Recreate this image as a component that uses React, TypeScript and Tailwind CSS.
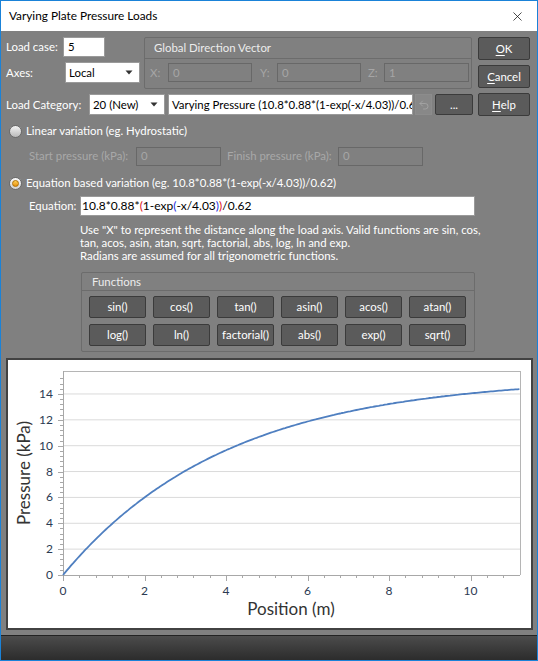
import { X, Undo2 } from 'lucide-react';

// equation used for the preview curve
const pressureAt = (x: number) => (10.8 * 0.88 * (1 - Math.exp(-x / 4.03))) / 0.62;

const PLOT = { left: 55, right: 512, top: 11, bottom: 215 };
const xPx = (v: number) => PLOT.left + v * 40.75;
const yPx = (v: number) => PLOT.bottom - v * 12.93;

function DlgButton({ children, className = '' }: { children: React.ReactNode; className?: string }) {
  return (
    <button
      className={`flex items-center justify-center rounded-[2px] border border-[#3b3b3b] bg-[#5b5b5b] text-white ${className}`}
    >
      {children}
    </button>
  );
}

function Arrow() {
  return (
    <svg width="8" height="5" viewBox="0 0 8 5" className="shrink-0">
      <path d="M0.5 0.5 L7.5 0.5 L4 4.5 Z" fill="#333" />
    </svg>
  );
}

function Dropdown({ value, width }: { value: string; width: string }) {
  return (
    <div className={`flex h-[21px] items-center justify-between border border-[#9a9a9a] bg-white pl-[3px] pr-[6px] text-black ${width}`}>
      <span>{value}</span>
      <Arrow />
    </div>
  );
}

function DisabledInput({ value, width }: { value: string; width: string }) {
  return (
    <div className={`flex h-[19px] items-center border border-[#686868] px-[4px] text-[#a6a6a6] ${width}`}>{value}</div>
  );
}

function Chart() {
  const pts: string[] = [];
  for (let x = 0; x <= 11.22; x += 0.05) {
    pts.push(`${xPx(x).toFixed(1)},${yPx(pressureAt(x)).toFixed(1)}`);
  }
  const majorY = [0, 2, 4, 6, 8, 10, 12, 14];
  const minorY: number[] = [];
  for (let v = 0; v <= 15.6; v += 0.4) minorY.push(v);
  const majorX = [0, 2, 4, 6, 8, 10];
  const minorX: number[] = [];
  for (let v = 0; v <= 11.2; v += 0.4) minorX.push(v);

  return (
    <svg width="523" height="268" className="block font-['Lato',sans-serif]">
      {majorY.slice(1).map((v) => (
        <line key={v} x1={PLOT.left} x2={PLOT.right} y1={yPx(v)} y2={yPx(v)} stroke="#dadada" strokeWidth="1" />
      ))}
      <line x1={PLOT.left} x2={PLOT.right} y1={PLOT.top + 0.5} y2={PLOT.top + 0.5} stroke="#b5b5b5" />
      <line x1={PLOT.right + 0.5} x2={PLOT.right + 0.5} y1={PLOT.top} y2={PLOT.bottom} stroke="#b5b5b5" />
      <line x1={PLOT.left + 0.5} x2={PLOT.left + 0.5} y1={PLOT.top} y2={PLOT.bottom} stroke="#a8a8a8" />
      <line x1={PLOT.left} x2={PLOT.right} y1={PLOT.bottom + 0.5} y2={PLOT.bottom + 0.5} stroke="#a8a8a8" />
      {minorY.map((v) => (
        <line key={v} x1={PLOT.left - 3} x2={PLOT.left} y1={Math.round(yPx(v)) + 0.5} y2={Math.round(yPx(v)) + 0.5} stroke="#a8a8a8" />
      ))}
      {majorY.map((v) => (
        <line key={v} x1={PLOT.left - 5} x2={PLOT.left} y1={Math.round(yPx(v)) + 0.5} y2={Math.round(yPx(v)) + 0.5} stroke="#a8a8a8" />
      ))}
      {minorX.map((v) => (
        <line key={v} x1={Math.round(xPx(v)) + 0.5} x2={Math.round(xPx(v)) + 0.5} y1={PLOT.bottom} y2={PLOT.bottom + 3} stroke="#a8a8a8" />
      ))}
      {majorX.map((v) => (
        <line key={v} x1={Math.round(xPx(v)) + 0.5} x2={Math.round(xPx(v)) + 0.5} y1={PLOT.bottom} y2={PLOT.bottom + 6} stroke="#a8a8a8" />
      ))}
      {majorY.map((v) => (
        <text key={v} x={45} y={yPx(v) + 4} textAnchor="end" fontSize="12" fill="#2b3a52">
          {v}
        </text>
      ))}
      {majorX.map((v) => (
        <text key={v} x={xPx(v)} y={235} textAnchor="middle" fontSize="12" fill="#2b3a52">
          {v}
        </text>
      ))}
      <polyline points={pts.join(' ')} fill="none" stroke="#4f7fc0" strokeWidth="1.8" />
      <text x={283} y={255} textAnchor="middle" fontSize="17" fill="#333">
        Position (m)
      </text>
      <text x={0} y={0} transform="translate(22 113) rotate(-90)" textAnchor="middle" fontSize="17" fill="#333">
        Pressure (kPa)
      </text>
    </svg>
  );
}

export default function App() {
  const fns = ['sin()', 'cos()', 'tan()', 'asin()', 'acos()', 'atan()', 'log()', 'ln()', 'factorial()', 'abs()', 'exp()', 'sqrt()'];

  return (
    <div className="flex h-[661px] w-[538px] flex-col border border-[#1a82d8] font-['Lato',sans-serif] text-[11.4px]">
      {/* title bar */}
      <div className="flex h-[30px] shrink-0 items-center justify-between bg-white pl-[8px] pr-[12px] text-black">
        <span className="text-[11.8px]">Varying Plate Pressure Loads</span>
        <X size={15} strokeWidth={1.2} color="#111" />
      </div>

      <div className="flex flex-1 flex-col bg-[#808080] pl-[5px] pr-[4px] text-white">
        {/* top block */}
        <div className="flex pt-[6px] pr-[3px]">
          <div className="flex w-[467px] flex-col">
            <div className="flex">
              <div className="flex w-[138px] flex-col">
                <div className="flex h-[20px] items-center">
                  <span className="w-[57px]">Load case:</span>
                  <div className="flex h-[20px] w-[42px] items-center border border-[#9a9a9a] bg-white pl-[4px] text-black">5</div>
                </div>
                <div className="mt-[5px] flex items-center">
                  <span className="w-[59px]">Axes:</span>
                  <Dropdown value="Local" width="w-[75px]" />
                </div>
              </div>
              <div className="flex h-[52px] w-[328px] flex-col rounded-[2px] border border-[#6c6c6c]">
                <div className="flex h-[21px] items-center border-b border-[#6c6c6c] pl-[9px] text-[#ececec]">Global Direction Vector</div>
                <div className="flex items-center pt-[4px] pl-[5px] text-[#a6a6a6]">
                  <span className="w-[18px]">X:</span>
                  <DisabledInput value="0" width="w-[84px]" />
                  <span className="ml-[8px] w-[17px]">Y:</span>
                  <DisabledInput value="0" width="w-[84px]" />
                  <span className="ml-[7px] w-[16px]">Z:</span>
                  <DisabledInput value="1" width="w-[85px]" />
                </div>
              </div>
            </div>
            <div className="mt-[5px] flex h-[21px] items-center">
              <span className="w-[83px]">Load Category:</span>
              <Dropdown value="20 (New)" width="w-[76px]" />
              <div className="ml-[3px] flex h-[21px] w-[245px] items-center overflow-hidden whitespace-nowrap border border-[#9a9a9a] bg-white pl-[3px] text-black">
                Varying Pressure (10.8*0.88*(1-exp(-x/4.03))/0.62)
              </div>
              <div className="ml-[2px] flex h-[21px] w-[17px] items-center justify-center border border-[#8c8c8c] bg-[#888888]">
                <Undo2 size={12} strokeWidth={1.5} color="#a9a9a9" />
              </div>
              <DlgButton className="ml-[3px] h-[21px] w-[38px]">...</DlgButton>
            </div>
          </div>
          <div className="ml-[5px] flex w-[52px] flex-col gap-[5px]">
            <DlgButton className="h-[23px]">
              <span className="underline underline-offset-2">O</span>K
            </DlgButton>
            <DlgButton className="h-[23px]">
              <span className="underline underline-offset-2">C</span>ancel
            </DlgButton>
            <DlgButton className="h-[23px]">
              <span className="underline underline-offset-2">H</span>elp
            </DlgButton>
          </div>
        </div>

        {/* linear variation */}
        <div className="mt-[8px] flex h-[14px] items-center pl-[3px]">
          <span className="h-[13px] w-[13px] rounded-full border border-[#6a6a6a] bg-linear-to-b from-[#f4f4f4] to-[#b9b9b9]" />
          <span className="ml-[4px]">Linear variation (eg. Hydrostatic)</span>
        </div>
        <div className="mt-[9px] flex h-[18px] items-center pl-[23px] text-[#a8a8a8]">
          <span className="w-[107px]">Start pressure (kPa):</span>
          <DisabledInput value="0" width="w-[85px] h-[18px]" />
          <span className="ml-[6px] w-[111px]">Finish pressure (kPa):</span>
          <DisabledInput value="0" width="w-[85px] h-[18px]" />
        </div>

        {/* equation variation */}
        <div className="mt-[11px] flex h-[14px] items-center pl-[3px]">
          <span className="flex h-[13px] w-[13px] items-center justify-center rounded-full border border-[#6a6a6a] bg-linear-to-b from-[#fafafa] to-[#d0d0d0]">
            <span className="h-[7px] w-[7px] rounded-full border border-[#b07000] bg-linear-to-b from-[#ffd050] to-[#e69000]" />
          </span>
          <span className="ml-[4px]">Equation based variation (eg. 10.8*0.88*(1-exp(-x/4.03))/0.62)</span>
        </div>
        <div className="mt-[6px] flex h-[20px] items-center pl-[23px]">
          <span className="w-[51px]">Equation:</span>
          <div className="flex h-[20px] w-[395px] items-center border border-[#9a9a9a] bg-white pl-[1px] text-[12px] text-black">
            10.8*0.88*<span className="text-[#e0101a]">(</span>1-exp<span className="text-[#1a2ee0]">(</span>-x/4.03
            <span className="text-[#1a2ee0]">)</span>
            <span className="text-[#e0101a]">)</span>/0.62
          </div>
        </div>
        <div className="mt-[7px] pl-[74px] leading-[13px]">
          <p>Use "X" to represent the distance along the load axis. Valid functions are sin, cos,</p>
          <p>tan, acos, asin, atan, sqrt, factorial, abs, log, ln and exp.</p>
          <p>Radians are assumed for all trigonometric functions.</p>
        </div>

        {/* functions */}
        <div className="mt-[10px] ml-[75px] flex h-[80px] w-[394px] flex-col rounded-[2px] border border-[#6c6c6c]">
          <div className="flex h-[18px] items-center border-b border-[#6c6c6c] pl-[10px] text-[#ececec]">Functions</div>
          <div className="grid grid-cols-6 gap-x-[7px] gap-y-[6px] pt-[5px] pl-[7px] pr-[8px]">
            {fns.map((f) => (
              <DlgButton key={f} className="h-[22px]">
                {f}
              </DlgButton>
            ))}
          </div>
        </div>

        {/* chart */}
        <div className="mt-[6px] border-2 border-[#424242] bg-white">
          <Chart />
        </div>

        <div className="-ml-[5px] -mr-[4px] mt-auto h-[25px] border-t border-[#222] bg-linear-to-b from-[#4c4c4c] to-[#2c2c2c]" />
      </div>
    </div>
  );
}
